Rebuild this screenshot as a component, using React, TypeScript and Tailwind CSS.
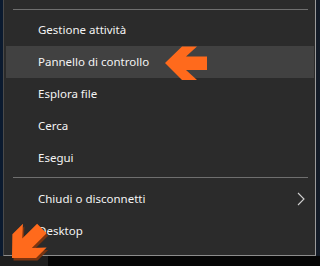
import React from "react";

const items1 = ["Gestione attività", "Pannello di controllo", "Esplora file", "Cerca", "Esegui"];

function Row({ label, active, chevron }: { label: string; active?: boolean; chevron?: boolean }) {
  return (
    <div
      className={
        "h-[32px] flex items-center justify-between ml-[2px] mr-[1px] pl-[32px] pr-[9px] " +
        (active ? "bg-[#414141]" : "")
      }
    >
      <span className="text-[11.5px] text-[#f4f4f4] leading-none pb-[1px]">{label}</span>
      {chevron && (
        <svg width="8" height="14" viewBox="0 0 8 14" className="mr-[0px]">
          <path d="M1 1 L7 7 L1 13" fill="none" stroke="#d0d0d0" strokeWidth="1.1" />
        </svg>
      )}
    </div>
  );
}

export default function App() {
  const arrow = "0,0 17,-16.5 32,-16.5 21,-6.5 42,-6.5 42,7 21,7 32,17 17,17";
  return (
    <div
      className="relative w-[320px] h-[266px] overflow-hidden flex flex-col bg-[#000]"
      style={{ fontFamily: '"Noto Sans", "Open Sans", sans-serif' }}
    >
      <div className="flex h-[256px]">
        <div className="w-[3px] bg-[#0b1a2f]" />
        <div className="w-[313px] bg-[#2b2b2b] border-l border-r border-b border-l-[#4a4a4a] border-r-[#9a9a9a] border-b-[#8c8c8c] flex flex-col">
          <div className="pt-[9px] ml-[9px] mr-[7px]">
            <div className="h-[1px] bg-[#6f6f6f]" />
          </div>
          <div className="h-[4px]" />
          {items1.map((l, i) => (
            <Row key={l} label={l} active={i === 1} />
          ))}
          <div className="pt-[3px] pb-[5px] ml-[9px] mr-[7px]">
            <div className="h-[1px] bg-[#6f6f6f]" />
          </div>
          <Row label="Chiudi o disconnetti" chevron />
          <Row label="Desktop" />
        </div>
        <div className="flex-1 bg-[#141c28]" />
      </div>
      <div className="flex flex-1">
        <div className="w-[48px] bg-[#1e1e1e]" />
        <div className="flex-1 bg-[#050505]" />
      </div>
      <svg className="absolute left-0 top-0 pointer-events-none" width="320" height="266" viewBox="0 0 320 266">
        <g transform="translate(165,63)">
          <polygon points={arrow} fill="#ff6a1c" />
        </g>
        <g transform="translate(13.5,260.5) rotate(-45)">
          <polygon points={arrow} fill="#7a3410" />
        </g>
        <g transform="translate(12,258) rotate(-45)">
          <polygon points={arrow} fill="#ff6a1c" />
        </g>
      </svg>
    </div>
  );
}
